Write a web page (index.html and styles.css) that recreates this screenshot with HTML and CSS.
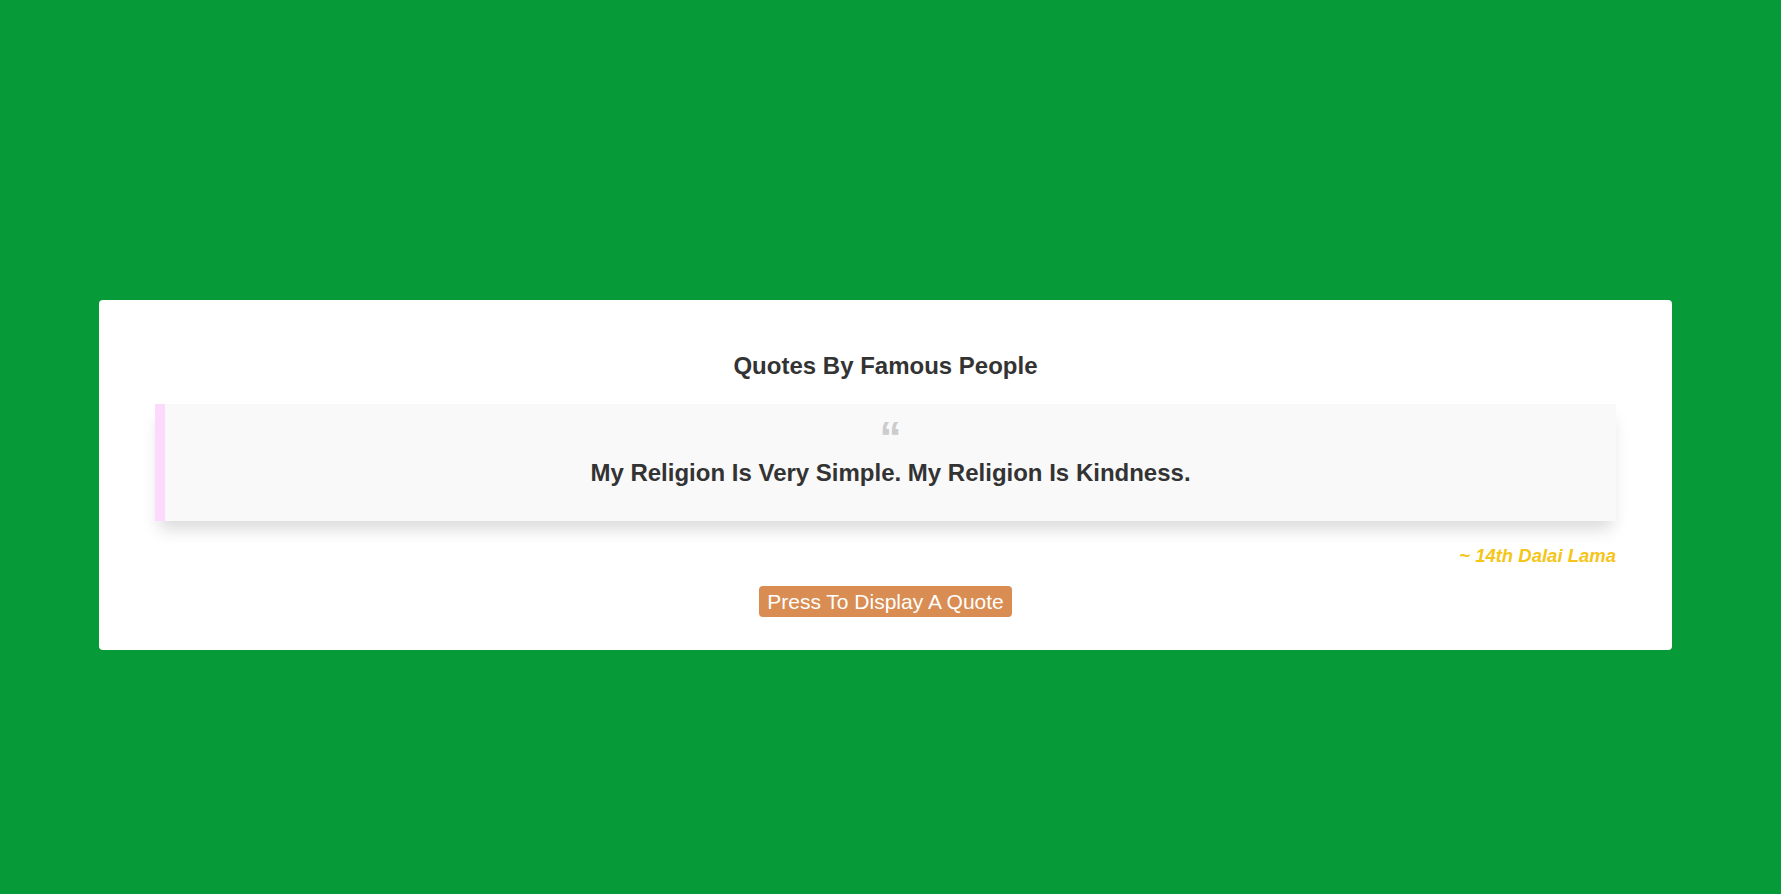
FILE: index.html
```html
<!DOCTYPE html>
<html lang="en">
<head>
<meta charset="utf-8">
<title>Quotes By Famous People</title>
<link rel="stylesheet" href="styles.css">
</head>
<body>
<main class="page">
  <section class="card">
    <h2 class="title">Quotes By Famous People</h2>
    <blockquote class="quote">
      <span class="quote-mark">&ldquo;</span>
      <p class="quote-text">My Religion Is Very Simple. My Religion Is Kindness.</p>
    </blockquote>
    <p class="author">~ 14th Dalai Lama</p>
    <div class="actions">
      <button class="btn" type="button">Press To Display A Quote</button>
    </div>
  </section>
</main>
</body>
</html>
```

FILE: styles.css
```css
html, body {
  margin: 0;
  padding: 0;
  height: 100%;
}
body {
  background: #069a38;
  font-family: "Liberation Sans", Arial, sans-serif;
  color: #333;
}
.page {
  height: 100%;
  display: flex;
  align-items: flex-start;
  justify-content: center;
  padding: 300px 109px 0 99px;
  box-sizing: border-box;
}
.card {
  flex: 1;
  background: #fff;
  border-radius: 4px;
  padding: 32px 56px 33px;
  display: flex;
  flex-direction: column;
}
.title {
  margin: 20px 0 24px;
  font-size: 24px;
  line-height: 28px;
  font-weight: bold;
  text-align: center;
  color: #333;
}
.quote {
  margin: 0;
  background: #f9f9f9;
  border-left: 10px solid #fdd9fb;
  box-shadow: 0 12px 16px -4px rgba(0, 0, 0, 0.15);
  padding: 21px 20px 34px;
  display: flex;
  flex-direction: column;
  align-items: center;
}
.quote-mark {
  font-size: 44px;
  line-height: 26px;
  height: 26px;
  font-weight: bold;
  color: #ccc;
}
.quote-text {
  margin: 8px 0 0;
  font-size: 24px;
  line-height: 28px;
  font-weight: bold;
  color: #333;
  text-align: center;
}
.author {
  margin: 24px 0 0;
  text-align: right;
  font-size: 18.5px;
  line-height: 22px;
  font-weight: bold;
  font-style: italic;
  color: #f5c518;
}
.actions {
  display: flex;
  justify-content: center;
  margin-top: 19px;
}
.btn {
  font-family: "Liberation Sans", Arial, sans-serif;
  font-size: 21px;
  line-height: 23px;
  padding: 4px 8px;
  color: #fff;
  background: #d98d53;
  border: none;
  border-radius: 4px;
}
```
